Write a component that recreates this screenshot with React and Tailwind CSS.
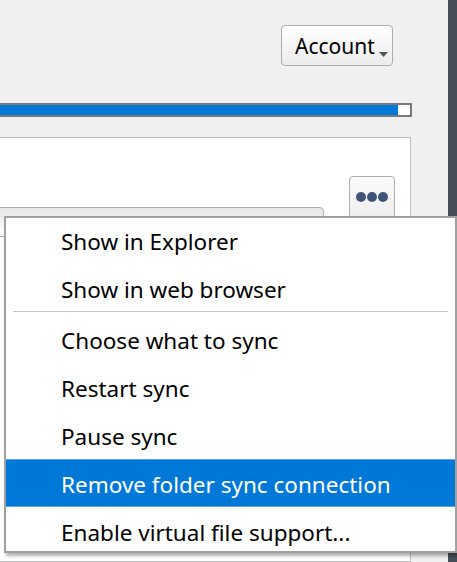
import React from 'react';

const items = [
  { label: 'Show in Explorer' },
  { label: 'Show in web browser' },
  { sep: true },
  { label: 'Choose what to sync' },
  { label: 'Restart sync' },
  { label: 'Pause sync' },
  { label: 'Remove folder sync connection', active: true },
  { label: 'Enable virtual file support...' },
];

function MenuItem({ label, active }) {
  if (active) {
    return (
      <div className="h-[48px] flex items-center pl-[55px] bg-[#0078d7] border-y border-[#56a6ec] text-white">
        <span className="pt-[3px]">{label}</span>
      </div>
    );
  }
  return (
    <div className="h-[48px] flex items-center pl-[55px] text-black">
      <span className="pt-[3px]">{label}</span>
    </div>
  );
}

function ContextMenu() {
  return (
    <div className="absolute left-[4px] top-[216px] w-[453px] h-[337px] bg-white border-2 border-[#a0a0a0] overflow-hidden shadow-[2px_3px_3px_rgba(0,0,0,0.3)] text-[22.5px]">
      <div className="-mt-[2px]">
        {items.map((it, i) =>
          it.sep ? (
            <div key={i} className="h-[4px] px-[7px]">
              <div className="h-px bg-[#c8c8c8] mt-[-1px]" />
            </div>
          ) : (
            <MenuItem key={i} label={it.label} active={it.active} />
          )
        )}
      </div>
    </div>
  );
}

export default function App() {
  return (
    <div
      className="relative w-[457px] h-[562px] overflow-hidden flex bg-[#f0f0f0]"
      style={{ fontFamily: '"Noto Sans", "Open Sans", sans-serif' }}
    >
      <div className="w-[448px] flex flex-col">
        {/* account row */}
        <div className="flex justify-end pt-[25px] pr-[55px]">
          <button className="w-[112px] h-[41px] rounded-[4px] border border-[#adadad] bg-gradient-to-b from-white to-[#ececec] flex items-end pl-[13px] pb-[8px] text-[21px] leading-none text-black relative">
            <span>Account</span>
            <svg className="absolute right-[4px] bottom-[8px]" width="9" height="5" viewBox="0 0 9 5">
              <path d="M0 0 L9 0 L4.5 5 Z" fill="#555" />
            </svg>
          </button>
        </div>

        {/* progress bar */}
        <div className="mt-[37px] -ml-[2px] w-[414px] h-[14px] border-2 border-[#7a7a7a] bg-white flex">
          <div className="w-[398px] h-full bg-[#0078d7]" />
        </div>

        {/* folder panel */}
        <div className="mt-[20px] -ml-[1px] w-[412px] flex-1 bg-white border border-[#bdbdbd] flex items-start">
          <div className="mt-[69px] -ml-[6px] w-[330px] h-[30px] rounded-t-[4px] border border-[#adadad] bg-gradient-to-b from-[#e6e6e6] to-white" />
          <div className="ml-[25px] mt-[38px] w-[46px] h-[60px] rounded-[4px] border border-[#adadad] bg-gradient-to-b from-[#fbfbfb] to-[#e8e8e8] flex justify-center pt-[15px]">
            <div className="flex gap-[1px]">
              <span className="w-[10px] h-[10px] rounded-full bg-[#3f5478]" />
              <span className="w-[10px] h-[10px] rounded-full bg-[#3f5478]" />
              <span className="w-[10px] h-[10px] rounded-full bg-[#3f5478]" />
            </div>
          </div>
        </div>
      </div>
      <div className="w-[9px] bg-[#454e59]" />

      <ContextMenu />
    </div>
  );
}
